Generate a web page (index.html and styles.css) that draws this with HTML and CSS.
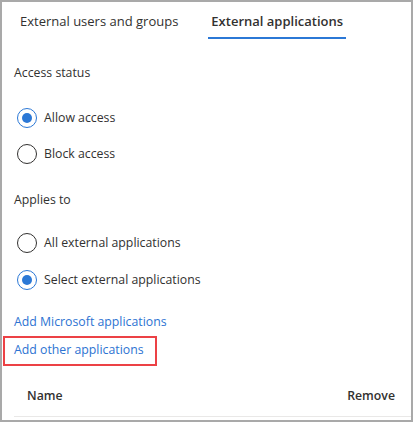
FILE: index.html
```html
<!DOCTYPE html>
<html>
<head>
<meta charset="utf-8">
<link rel="stylesheet" href="styles.css">
</head>
<body>
<div class="frame">
  <div class="tabs">
    <div class="tab">External users and groups</div>
    <div class="tab active">External applications</div>
  </div>
  <div class="content">
    <div class="label first">Access status</div>
    <div class="group">
      <div class="radio-row"><span class="radio checked"></span><span>Allow access</span></div>
      <div class="radio-row"><span class="radio"></span><span>Block access</span></div>
    </div>
    <div class="label second">Applies to</div>
    <div class="group tight">
      <div class="radio-row"><span class="radio"></span><span>All external applications</span></div>
      <div class="radio-row"><span class="radio checked"></span><span>Select external applications</span></div>
    </div>
    <div class="links">
      <a class="link">Add Microsoft applications</a>
      <div class="highlight-wrap">
        <a class="link">Add other applications</a>
        <span class="highlight"></span>
      </div>
    </div>
    <div class="table-head">
      <span class="th">Name</span>
      <span class="th">Remove</span>
    </div>
  </div>
</div>
</body>
</html>
```
FILE: styles.css
```css
* { box-sizing: border-box; }
html, body { margin: 0; padding: 0; background: #fff; }
body {
  font-family: "Open Sans", "Noto Sans", sans-serif;
  font-size: 13px;
  color: #323130;
}
.frame {
  width: 413px;
  height: 422px;
  border: 2px solid #a9a9a9;
  overflow: hidden;
  position: relative;
}
.tabs {
  display: flex;
  gap: 27px;
  padding-left: 15px;
}
.tab {
  padding: 9px 3px 6px;
  line-height: 20px;
  border-bottom: 2px solid transparent;
  white-space: nowrap;
}
.tab.active {
  font-weight: 600;
  border-bottom-color: #2b78d6;
}
.content {
  padding-left: 12px;
  font-size: 12.3px;
}
.label {
  line-height: 20px;
}
.label.first { margin-top: 24px; }
.label.second { margin-top: 26px; }
.group {
  display: flex;
  flex-direction: column;
  gap: 16px;
  margin-top: 25px;
}
.group.tight { margin-top: 23px; gap: 17px; }
.radio-row {
  display: flex;
  align-items: center;
  gap: 7px;
  line-height: 20px;
  padding-left: 3px;
}
.radio {
  width: 20px;
  height: 20px;
  border: 1px solid #323130;
  border-radius: 50%;
  display: inline-block;
  flex: none;
  position: relative;
}
.radio.checked {
  border-color: #2b78d6;
}
.radio.checked::after {
  content: "";
  position: absolute;
  left: 4px;
  top: 4px;
  width: 10px;
  height: 10px;
  border-radius: 50%;
  background: #2b78d6;
}
.links {
  display: flex;
  flex-direction: column;
  gap: 8px;
  margin-top: 22px;
}
.link {
  color: #2d73d2;
  line-height: 20px;
  display: inline-block;
}
.highlight-wrap {
  position: relative;
}
.highlight {
  position: absolute;
  left: -11px;
  top: -4px;
  width: 154px;
  height: 30px;
  border: 2px solid #ec4145;
}
.table-head {
  display: flex;
  justify-content: space-between;
  margin-top: 26px;
  padding: 0 16px 10px 13px;
  border-bottom: 1px solid #e9e8e7;
  line-height: 20px;
}
.th { font-weight: 600; }
```
